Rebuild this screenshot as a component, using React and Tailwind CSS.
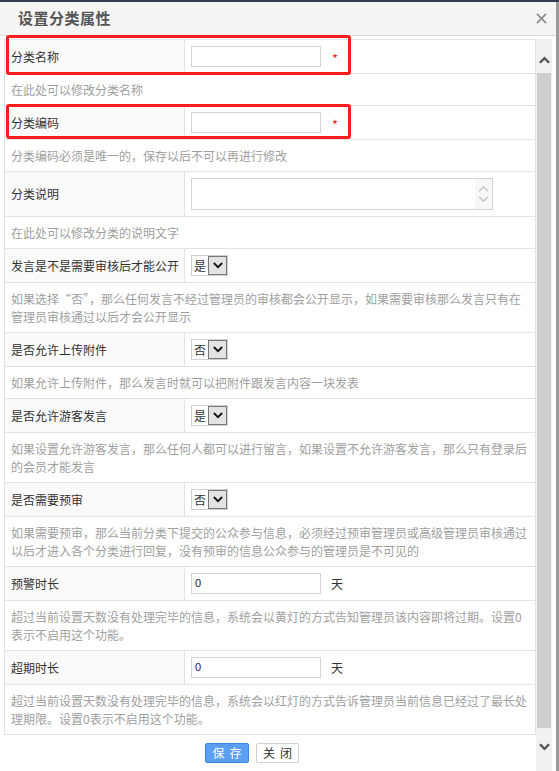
import React from 'react'

// one row per field, followed by its help text
const FIELDS = [
  { label: '分类名称', kind: 'input', required: true, help: ['在此处可以修改分类名称'] },
  { label: '分类编码', kind: 'input', required: true, help: ['分类编码必须是唯一的，保存以后不可以再进行修改'] },
  { label: '分类说明', kind: 'textarea', help: ['在此处可以修改分类的说明文字'] },
  {
    label: '发言是不是需要审核后才能公开', kind: 'select', value: '是',
    help: ['如果选择“否”，那么任何发言不经过管理员的审核都会公开显示，如果需要审核那么发言只有在', '管理员审核通过以后才会公开显示'],
  },
  { label: '是否允许上传附件', kind: 'select', value: '否', help: ['如果允许上传附件，那么发言时就可以把附件跟发言内容一块发表'] },
  {
    label: '是否允许游客发言', kind: 'select', value: '是',
    help: ['如果设置允许游客发言，那么任何人都可以进行留言，如果设置不允许游客发言，那么只有登录后', '的会员才能发言'],
  },
  {
    label: '是否需要预审', kind: 'select', value: '否',
    help: ['如果需要预审，那么当前分类下提交的公众参与信息，必须经过预审管理员或高级管理员审核通过', '以后才进入各个分类进行回复，没有预审的信息公众参与的管理员是不可见的'],
  },
  {
    label: '预警时长', kind: 'days',
    help: ['超过当前设置天数没有处理完毕的信息，系统会以黄灯的方式告知管理员该内容即将过期。设置0', '表示不启用这个功能。'],
  },
  {
    label: '超期时长', kind: 'days',
    help: ['超过当前设置天数没有处理完毕的信息，系统会以红灯的方式告诉管理员当前信息已经过了最长处', '理期限。设置0表示不启用这个功能。'],
  },
]

function Chevron({ up, className, color = '#555', width = 2.5 }) {
  return (
    <svg viewBox="0 0 12 8" className={className}>
      <polyline
        points={up ? '1,7 6,2 11,7' : '1,1 6,6 11,1'}
        fill="none"
        stroke={color}
        strokeWidth={width}
      />
    </svg>
  )
}

function SelectBox({ value }) {
  return (
    <div className="inline-flex h-[21px] border border-[#d0d0d0] bg-white">
      <span className="w-[16px] text-center text-[12px] leading-[19px] text-[#333]">{value}</span>
      <span className="w-[19px] bg-[#e3e3e3] border border-[#777] flex items-center justify-center">
        <Chevron className="w-[10px] h-[7px]" color="#111" width={2.2} />
      </span>
    </div>
  )
}

function FieldControl({ field }) {
  if (field.kind === 'input') return (
    <div className="flex items-center">
      <div className="w-[130px] h-[21px] border border-[#d4d4d4] bg-white" />
      <span className="ml-[11px] text-[13px] leading-none text-[#ff2020] mt-[3px]">*</span>
    </div>
  )
  if (field.kind === 'textarea') return (
    <div className="w-[302px] h-[32px] border border-[#d4d4d4] bg-white flex justify-end">
      <div className="w-[17px] bg-[#f7f7f7] flex flex-col items-center justify-center gap-[4px]">
        <Chevron up className="w-[11px] h-[7px]" color="#c8c8c8" width={1.8} />
        <Chevron className="w-[11px] h-[7px]" color="#c8c8c8" width={1.8} />
      </div>
    </div>
  )
  if (field.kind === 'select') return <SelectBox value={field.value} />
  return (
    <div className="flex items-center">
      <div className="w-[130px] h-[21px] border border-[#d4d4d4] bg-white pl-[3px] text-[11px] leading-[19px] text-[#222] font-['Liberation_Sans',sans-serif]">0</div>
      <span className="ml-[10px] text-[12px] text-[#333]">天</span>
    </div>
  )
}

export default function App() {
  return (
    <div className="relative w-[559px] h-[771px] overflow-hidden bg-white border-t-2 border-[#343d4f] flex flex-col font-['Noto_Sans_CJK_SC','Noto_Sans',sans-serif]">
      <div className="flex-1 min-h-0 flex flex-col border-r-[3px] border-[#9a9a9a]">

        {/* Header */}
        <div className="h-[34px] shrink-0 bg-[#f5f5f5] border-b border-[#dcdcdc] flex items-center justify-between pl-[18px] pr-[9px]">
          <span className="text-[15px] font-bold text-[#555] tracking-[0.5px]">设置分类属性</span>
          <svg viewBox="0 0 12 12" className="w-[11px] h-[11px]">
            <path d="M1 1 L11 11 M11 1 L1 11" stroke="#8a8a8a" strokeWidth="1.8" />
          </svg>
        </div>

        {/* Body */}
        <div className="flex-1 min-h-0 flex">
          <div className="w-[536px] pl-[4px] pt-[3px]">
            <div className="w-[532px] border border-[#e3e3e3] border-b-0">
              {FIELDS.map(f => (
                <React.Fragment key={f.label}>
                  <div className={`flex border-b border-[#e3e3e3] ${f.kind === 'textarea' ? 'h-[45px]' : 'h-[34px]'}`}>
                    <div className="w-[180px] shrink-0 bg-[#fafafa] border-r border-[#e3e3e3] pl-[6px] flex items-center text-[12px] text-[#333]">
                      {f.label}
                    </div>
                    <div className="flex-1 pl-[6px] flex items-center">
                      <FieldControl field={f} />
                    </div>
                  </div>
                  <div className="border-b border-[#e3e3e3] pl-[6px] pt-[7px] pb-[6px] text-[12px] leading-[18px] text-[#a0a0a0]">
                    {f.help.map(line => (
                      <div key={line} className="whitespace-nowrap">{line}</div>
                    ))}
                  </div>
                </React.Fragment>
              ))}
            </div>

            {/* Footer buttons */}
            <div className="flex gap-[7px] pl-[201px] mt-[8px]">
              <button className="w-[44px] h-[20px] bg-[#5b9ff2] border border-[#3a8ae6] rounded-[2px] text-[12px] leading-none text-white tracking-[5px] pl-[5px]">
                保存
              </button>
              <button className="w-[43px] h-[20px] bg-white border border-[#d0d0d0] rounded-[2px] text-[12px] leading-none text-[#333] tracking-[5px] pl-[5px]">
                关闭
              </button>
            </div>
          </div>

          {/* Scrollbar */}
          <div className="w-[16px] mt-[3px] bg-[#f0f0f0] flex flex-col">
            <div className="h-[34px] flex justify-center pt-[17px]">
              <Chevron up className="w-[11px] h-[8px]" />
            </div>
            <div className="h-[655px] mx-[1px] bg-[#cdcdcd]" />
            <div className="flex justify-center pt-[15px]">
              <Chevron className="w-[11px] h-[8px]" />
            </div>
          </div>
        </div>
      </div>

      {/* Red highlight boxes */}
      <div className="absolute left-[6px] top-[33px] w-[345px] h-[40px] border-[3px] border-[#ff1c1c] rounded-[3px]" />
      <div className="absolute left-[6px] top-[102px] w-[345px] h-[35px] border-[3px] border-[#ff1c1c] rounded-[3px]" />
    </div>
  )
}
